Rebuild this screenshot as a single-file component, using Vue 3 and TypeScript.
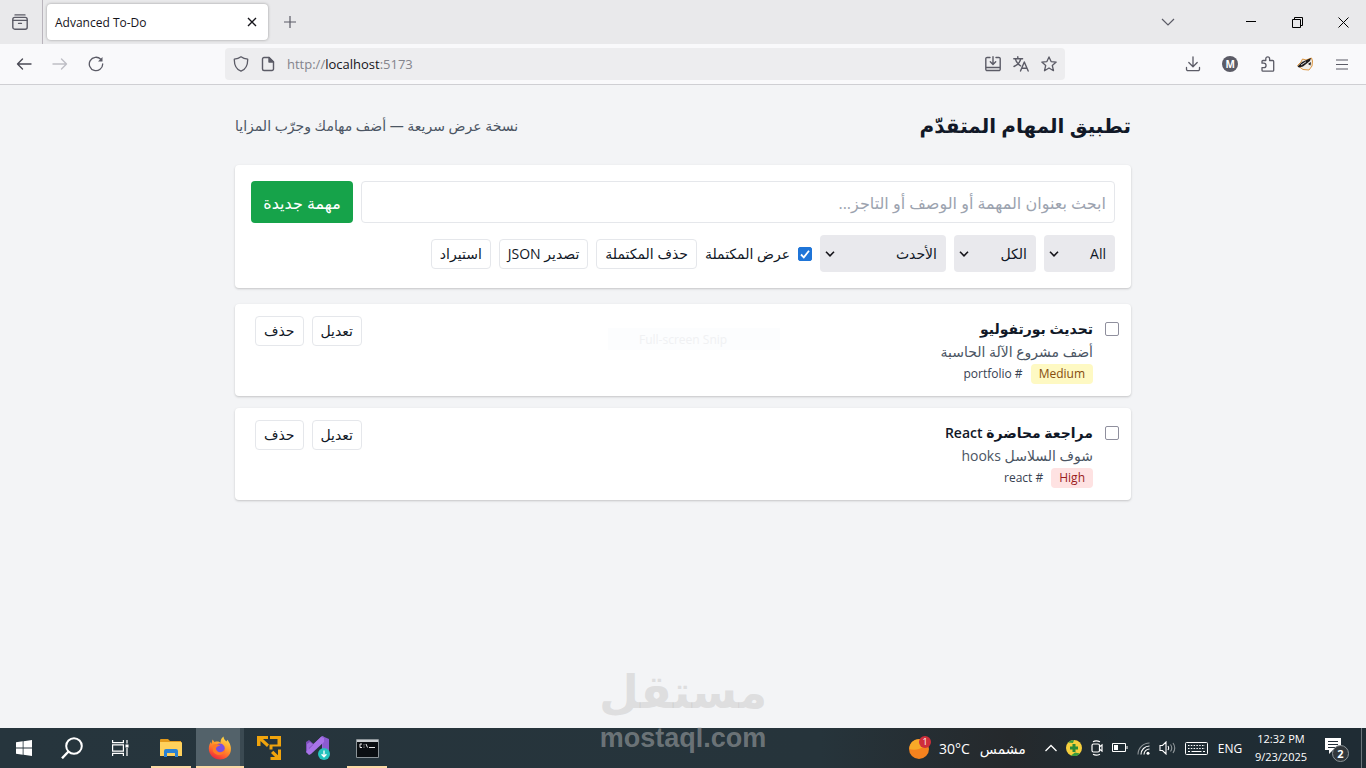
<script setup lang="ts">
import { computed, ref } from 'vue'

interface Task {
  id: number
  title: string
  description: string
  priority: 'High' | 'Medium' | 'Low'
  tag: string
  done: boolean
}

const tasks = ref<Task[]>([
  { id: 1, title: 'تحديث بورتفوليو', description: 'أضف مشروع الآلة الحاسبة', priority: 'Medium', tag: 'portfolio', done: false },
  { id: 2, title: 'مراجعة محاضرة React', description: 'شوف السلاسل hooks', priority: 'High', tag: 'react', done: false },
])
const query = ref('')
const showDone = ref(true)

const visible = computed(() =>
  tasks.value.filter(
    (t) => (showDone.value || !t.done) && (t.title + t.description + t.tag).includes(query.value),
  ),
)

function remove(id: number) {
  tasks.value = tasks.value.filter((t) => t.id !== id)
}
function clearDone() {
  tasks.value = tasks.value.filter((t) => !t.done)
}
</script>

<template>
  <div class="screen">
    <header class="tabs">
      <button class="ib view" aria-label="Firefox View">
        <svg width="16" height="16" viewBox="0 0 16 16" fill="none" stroke="#5b5b66" stroke-width="1.4" stroke-linecap="round"><path d="M3 .9h10" /><rect x=".8" y="3.4" width="14.4" height="11.8" rx="2" /><path d="M1 6.4h14M6.5 9.4h3" stroke-width="1.3" /></svg>
      </button>
      <div class="tab">
        <span>Advanced To-Do</span>
        <button class="ib x" aria-label="Close tab">
          <svg width="10" height="10" viewBox="0 0 10 10" stroke="#15141a" stroke-width="1.4"><path d="M1 1l8 8M9 1L1 9" /></svg>
        </button>
      </div>
      <button class="ib plus" aria-label="New tab">
        <svg width="12" height="12" viewBox="0 0 12 12" stroke="#5b5b66" stroke-width="1.2"><path d="M6 0v12M0 6h12" /></svg>
      </button>
      <div class="grow"></div>
      <button class="ib list" aria-label="List all tabs">
        <svg width="14" height="8" viewBox="0 0 14 8" fill="none" stroke="#5b5b66" stroke-width="1.2"><path d="M1 1l6 6 6-6" /></svg>
      </button>
      <div class="win">
        <button class="ib" aria-label="Minimize"><svg width="10" height="10" viewBox="0 0 10 10" stroke="#000"><path d="M0 4.5h10" /></svg></button>
        <button class="ib" aria-label="Restore"><svg width="11" height="11" viewBox="0 0 11 11" fill="none" stroke="#000"><path d="M.5 2.5h8v8h-8zM2.5 2.500v-2h8v8h-2" /></svg></button>
        <button class="ib" aria-label="Close"><svg width="11" height="11" viewBox="0 0 11 11" stroke="#000"><path d="M.5 .5l10 10M10.500 .5l-10 10" /></svg></button>
      </div>
    </header>

    <nav class="toolbar">
      <div class="navs">
        <button class="ib" aria-label="Back"><svg width="16" height="16" viewBox="0 0 16 16" fill="none" stroke="#4a4a55" stroke-width="1.4" stroke-linecap="round" stroke-linejoin="round"><path d="M15 8H1.500M6.500 3L1.500 8l5 5" /></svg></button>
        <button class="ib" aria-label="Forward"><svg width="16" height="16" viewBox="0 0 16 16" fill="none" stroke="#bebec5" stroke-width="1.4" stroke-linecap="round" stroke-linejoin="round"><path d="M1 8h13.500M9.500 3l5 5-5 5" /></svg></button>
        <button class="ib" aria-label="Reload"><svg width="16" height="16" viewBox="0 0 16 16" fill="none" stroke="#5b5b66" stroke-width="1.3" stroke-linecap="round"><path d="M12.800 3.300A6.700 6.700 0 1 0 14.700 8" /><path d="M14.500 1v4.500H10z" fill="#5b5b66" stroke="none" /></svg></button>
      </div>
      <div class="url">
        <svg width="16" height="16" viewBox="0 0 16 16" fill="none" stroke="#5b5b66" stroke-width="1.3" stroke-linejoin="round"><path d="M8 .8C6 2.300 3.500 3 1.300 3.200 1.200 8.500 2.700 13 8 15.200c5.300-2.200 6.800-6.700 6.700-12C12.500 3 10 2.300 8 .8z" /></svg>
        <svg width="14" height="16" viewBox="0 0 14 16" fill="none" stroke="#5b5b66" stroke-width="1.4" stroke-linejoin="round"><path d="M8 1.500H3A1.500 1.500 0 0 0 1.500 3v10A1.500 1.500 0 0 0 3 14.500h8a1.500 1.500 0 0 0 1.500-1.500V6z" /><path d="M8 1.500V6h4.500z" fill="#5b5b66" /></svg>
        <span class="addr">http://<b>localhost</b>:5173</span>
        <button class="ib" aria-label="Install"><svg width="16" height="16" viewBox="0 0 16 16" fill="none" stroke="#5b5b66" stroke-width="1.4" stroke-linecap="round" stroke-linejoin="round"><path d="M5 1.500H2.200A1.300 1.300 0 0 0 .8 2.800v10.400a1.300 1.300 0 0 0 1.400 1.300h11.600a1.300 1.300 0 0 0 1.400-1.300V2.800a1.300 1.300 0 0 0-1.400-1.300H11M1 11.500h14M8 .8v7.500M5.300 5.800L8 8.500l2.700-2.700" /></svg></button>
        <button class="ib" aria-label="Translate"><svg width="16" height="16" viewBox="0 0 16 16" fill="none" stroke="#5b5b66" stroke-width="1.4" stroke-linecap="round" stroke-linejoin="round"><path d="M.8 2.800h8.800M4.800 .8v2M2.300 2.800c.8 3 3 5.700 5.300 7M7.800 2.800C7 6 4 9.200 1 10.500M7.500 15l3.800-9 3.900 9M8.800 12.300h5" /></svg></button>
        <button class="ib" aria-label="Bookmark"><svg width="16" height="16" viewBox="0 0 16 16" fill="none" stroke="#5b5b66" stroke-width="1.3" stroke-linejoin="round"><path d="M8 .9l2.100 4.700 5.100.5-3.900 3.400 1.200 5.200L8 12l-4.500 2.700 1.200-5.200L.8 6.100l5.100-.5z" /></svg></button>
      </div>
      <div class="tools">
        <button class="ib" aria-label="Downloads"><svg width="16" height="16" viewBox="0 0 16 16" fill="none" stroke="#5b5b66" stroke-width="1.300" stroke-linecap="round" stroke-linejoin="round"><path d="M8 .8v9.700M3.800 6.500L8 10.700l4.200-4.200M1.500 11.500v1.800a1.400 1.400 0 0 0 1.400 1.400h10.200a1.400 1.400 0 0 0 1.400-1.400v-1.800" /></svg></button>
        <button class="ib" aria-label="Account"><span class="avatar">M</span></button>
        <button class="ib" aria-label="Extensions"><svg width="16" height="16" viewBox="0 0 16 16" fill="none" stroke="#5b5b66" stroke-width="1.300" stroke-linejoin="round"><path d="M2 7.200V5.500a1 1 0 0 1 1-1h2.800V2.700a1.900 1.900 0 0 1 3.800 0v1.800h3.100a1 1 0 0 1 1 1v8.700a1 1 0 0 1-1 1H3a1 1 0 0 1-1-1v-2.500h1.800a2.200 2.200 0 0 0 0-4.500z" /></svg></button>
        <button class="ib" aria-label="Privacy Badger"><svg width="16" height="14" viewBox="0 0 16 14"><path d="M.5 8.500L4 5l1.500-3L9 3l5.500-2 1 3-.5 5-3 4-6-.5z" fill="#efece6" stroke="#d98a2b" stroke-width=".9" /><path d="M.5 9.500L5 5l9-4-1 3-7 5.500-4 1zM11 7l3-2-.5 3.500z" fill="#1d1b1c" /><path d="M4 8l5-3.200" stroke="#fff" stroke-width=".8" /></svg></button>
        <button class="ib" aria-label="Menu"><svg width="12" height="11" viewBox="0 0 12 11" stroke="#5b5b66" stroke-width="1.200"><path d="M0 1h12M0 5.500h12M0 10h12" /></svg></button>
      </div>
    </nav>

    <main class="page" dir="rtl" lang="ar">
      <div class="wrap">
        <div class="head">
          <h1>تطبيق المهام المتقدّم</h1>
          <p>نسخة عرض سريعة — أضف مهامك وجرّب المزايا</p>
        </div>

        <section class="card panel">
          <div class="row">
            <input v-model="query" class="search" type="text" aria-label="بحث" placeholder="ابحث بعنوان المهمة أو الوصف أو التاجز..." />
            <button class="new">مهمة جديدة</button>
          </div>
          <div class="row filters">
            <div class="sel s1"><select aria-label="الأولوية"><option>All</option></select><svg width="10" height="6" viewBox="0 0 10 6" fill="none" stroke="#15141a" stroke-width="1.600"><path d="M1 .8l4 4 4-4" /></svg></div>
            <div class="sel s2"><select aria-label="الحالة"><option>الكل</option></select><svg width="10" height="6" viewBox="0 0 10 6" fill="none" stroke="#15141a" stroke-width="1.600"><path d="M1 .8l4 4 4-4" /></svg></div>
            <div class="sel s3"><select aria-label="الترتيب"><option>الأحدث</option></select><svg width="10" height="6" viewBox="0 0 10 6" fill="none" stroke="#15141a" stroke-width="1.600"><path d="M1 .8l4 4 4-4" /></svg></div>
            <label class="show"><input v-model="showDone" class="check" type="checkbox" /><span>عرض المكتملة</span></label>
            <button class="btn" @click="clearDone">حذف المكتملة</button>
            <button class="btn">تصدير JSON</button>
            <button class="btn">استيراد</button>
          </div>
        </section>

        <ul class="tasks">
          <li v-for="t in visible" :key="t.id" class="card task">
            <input :id="`task-${t.id}`" v-model="t.done" class="check" type="checkbox" />
            <div class="body">
              <label class="title" :for="`task-${t.id}`">{{ t.title }}</label>
              <p class="desc">{{ t.description }}</p>
              <div class="meta">
                <span class="badge" :class="t.priority.toLowerCase()">{{ t.priority }}</span>
                <span># {{ t.tag }}</span>
              </div>
            </div>
            <div class="actions">
              <button class="btn">تعديل</button>
              <button class="btn" @click="remove(t.id)">حذف</button>
            </div>
          </li>
        </ul>
      </div>
      <div class="snip" dir="ltr">Full-screen Snip</div>
    </main>

    <footer class="taskbar">
      <div class="pins">
        <button class="pin" aria-label="Start"><svg width="16" height="16" viewBox="0 0 16 16" fill="#fff"><path d="M0 2.300L6.700 1.300v6.300H0zM7.500 1.200L16 0v7.600H7.500zM0 8.400h6.700v6.300L0 13.700zM7.500 8.400H16V16l-8.500-1.200z" /></svg></button>
        <button class="pin" aria-label="Search"><svg width="22" height="22" viewBox="0 0 22 22" fill="none" stroke="#fff" stroke-width="2"><circle cx="13" cy="9" r="7.800" /><path d="M7.500 14.500L1 21.300" stroke-width="2.400" /></svg></button>
        <button class="pin" aria-label="Task View"><svg width="17" height="16" viewBox="0 0 17 16" fill="none" stroke="#fff" stroke-width="1.200"><path d="M.6 0v2.600h10.800V0M.6 16v-2.600h10.800V16M.6 4.800h10.800v6.400H.6zM15 0v3.500M15 8v8" /><path d="M13.500 4.500h3v3h-3z" fill="#fff" stroke="none" /></svg></button>
      </div>
      <div class="apps">
        <button class="pin open" aria-label="File Explorer"><svg width="22" height="20" viewBox="0 0 22 20"><path d="M0 2a1 1 0 0 1 1-1h7l2 2h11v3H0z" fill="#e39a1b" /><path d="M0 4h21a1 1 0 0 1 1 1v13H0z" fill="#ffd15c" /><path d="M4 18v-5a2 2 0 0 1 2-2h10a2 2 0 0 1 2 2v6h-3v-4H7v4H4z" fill="#2b82d4" /></svg></button>
        <button class="pin active" aria-label="Firefox"><svg width="24" height="24" viewBox="0 0 24 24"><defs><linearGradient id="fx" x1=".8" y1="0" x2=".3" y2="1"><stop offset="0" stop-color="#ffe14a" /><stop offset=".45" stop-color="#ff9a2a" /><stop offset=".75" stop-color="#ff5a2f" /><stop offset="1" stop-color="#e6253f" /></linearGradient></defs><path d="M15.500.5c.2 2.500 1.500 3.600 3 5.100l.8-1.800c2.800 3.300 4.500 7.700 3.300 12-1.300 4.800-5.600 7.700-10.500 7.700C6 23.500.8 18.800.8 12.700c0-3.200 1-5.200 2-6.700l.6 2L4.500 3.500 6.500 6c3-.8 4.500-.3 6 .8 0-2.800 1-5 3-6.300z" fill="url(#fx)" /><circle cx="11.800" cy="12.500" r="5" fill="#7a4fe0" /><path d="M4.500 9c3-2 5.500-1 8 .6-3 .4-3.600 1.200-4.600 2.600C8 16.500 14 18 17 13c1.500 6-8.500 8.500-12 2.500z" fill="#ff7a25" /></svg></button>
        <button class="pin" aria-label="Virtual machine"><svg width="24" height="24" viewBox="0 0 24 24" fill="#f0a40d"><path d="M0 0h11v3H6l6 5.500-2 2.500-6.500-6V10H0z" /><path d="M13 0h11v10.500h-8.500v3H12.500V8.500h8V3H13z" /><path d="M24 13.500V24H13.500v-3h4.500l-4-4 2.300-2.300 4.700 4.500v-5.700z" /></svg></button>
        <button class="pin" aria-label="Visual Studio"><svg width="26" height="24" viewBox="0 0 26 24"><path d="M1 6l3-2 7 6-3 4-4 4-3-2z" fill="#7b4db8" /><path d="M4 12L17 0l2 1v16L5 6 2 8v7l3 2z" fill="#a06ee0" /><path d="M17 0l7 3v17l-6 3z" fill="#8a5bd0" /><path d="M17 7l-6 5 6 5z" fill="#24343c" /><path d="M1 16L16 1l3 1v4L6 18l-2 1z" fill="#a873e8" /><circle cx="19" cy="18" r="6" fill="#25c3bd" /><path d="M19 14.500v6M16.600 18.300l2.400 2.500 2.400-2.500" fill="none" stroke="#fff" stroke-width="1.300" /></svg></button>
        <button class="pin open" aria-label="Command Prompt"><svg width="23" height="19" viewBox="0 0 23 19"><path d="M.5.5h22v18H.5z" fill="#0b0f12" stroke="#8c9498" /><path d="M1 1h21v2H1z" fill="#c9cdcf" /><path d="M6 5H4v3.500h2M8 5.500v.8M8 7.700v.8M10 5l1.500 3.500M13 8.500h6" fill="none" stroke="#e8e8e8" /></svg></button>
      </div>
      <div class="grow"></div>
      <button class="weather" aria-label="Weather">
        <svg width="24" height="24" viewBox="0 0 24 24"><circle cx="10" cy="13" r="10" fill="#f5821e" /><path d="M.4 11A10 10 0 0 1 18 7c-3 5-10 8-17.500 6z" fill="#f7a928" /><circle cx="16" cy="6" r="6" fill="#cf2f3a" /><text x="16" y="9" font-size="9" fill="#fff" text-anchor="middle">1</text></svg>
        <span>30°C</span><span dir="rtl" class="sunny">مشمس</span>
      </button>
      <div class="tray">
        <svg width="12" height="8" viewBox="0 0 12 8" fill="none" stroke="#fff" stroke-width="1.300"><path d="M.5 7L6 1.500 11.500 7" /></svg>
        <svg width="16" height="16" viewBox="0 0 16 16"><circle cx="8" cy="8" r="8" fill="#f6cf3d" /><path d="M2 2.500A8 8 0 0 1 8 0l-1 3zM14 13.500A8 8 0 0 1 5 15.500l4-3z" fill="#3a9b3f" /><path d="M8 4v8M4 8h8" stroke="#2c8a37" stroke-width="3" /></svg>
        <svg width="12" height="16" viewBox="0 0 12 16" fill="none" stroke="#fff" stroke-width="1.200"><path d="M2 1.800Q5 0 9 1.800M2 14.200q3 1.800 7 0M8.500 6.800L11 5v6L8.500 9.200" /><rect x="1" y="4" width="7.500" height="8" rx="1.500" /></svg>
        <svg width="16" height="10" viewBox="0 0 16 10" fill="none" stroke="#fff"><path d="M.5 .5h13v8H.5z" /><path d="M2 2h4v5H2z" fill="#fff" stroke="none" /><path d="M15 3v3" /></svg>
        <svg width="13" height="13" viewBox="0 0 13 13" fill="none" stroke="#fff" stroke-width="1.100"><path d="M1 12.500A11.500 11.500 0 0 1 12.500 1" opacity=".5" /><path d="M4 12.500A8.500 8.500 0 0 1 12.500 4M7 12.500A5.500 5.500 0 0 1 12.500 7" /><circle cx="11" cy="11.300" r="1.500" fill="#fff" stroke="none" /></svg>
        <svg width="17" height="14" viewBox="0 0 17 14" fill="none" stroke="#fff" stroke-width="1.100"><path d="M1 4.500h2.500L7 1v12L3.500 9.500H1zM9 5q1.300 2 0 4" /><path d="M11.500 3.500q2.500 3.500 0 7M14 2q3.500 5 0 10" opacity=".5" /></svg>
        <svg width="23" height="13" viewBox="0 0 23 13" fill="none" stroke="#fff"><rect x=".5" y=".5" width="22" height="12" rx="1" /><path d="M3 3.500h17M3 6.500h17" stroke-dasharray="1.500 1.300" /><path d="M3 9.500h2M6.500 9.500h10M18 9.500h2" /></svg>
      </div>
      <span class="lang">ENG</span>
      <div class="clock"><span>12:32 PM</span><span>9/23/2025</span></div>
      <button class="note" aria-label="Notifications">
        <svg width="26" height="26" viewBox="0 0 26 26"><path d="M1 1h16v12H9l-4 4v-4H1z" fill="#fff" /><path d="M4 4.500h10M4 7.500h10M4 10.500h8" stroke="#24303a" /><circle cx="16.500" cy="16.500" r="8" fill="#32383c" stroke="#8d9599" /><text x="16.500" y="20.500" font-size="11" font-weight="700" fill="#fff" text-anchor="middle">2</text></svg>
      </button>
      <div class="peek"></div>
    </footer>

    <div class="mark" aria-hidden="true">
      <span class="mark-ar" dir="rtl">مستقل</span>
      <span class="mark-en">mostaql.com</span>
    </div>
  </div>
</template>

<style>
body {
  margin: 0;
}
</style>

<style scoped>
* {
  box-sizing: border-box;
}
.screen {
  position: relative;
  display: flex;
  flex-direction: column;
  min-height: 100vh;
  background: #f3f4f6;
  color: #111827;
  font-family: 'Open Sans', 'Noto Sans', 'DejaVu Sans', sans-serif;
}
button {
  font: inherit;
  color: inherit;
  padding: 0;
  border: 0;
  background: none;
}
svg {
  display: block;
  flex: none;
}
p,
h1,
ul {
  margin: 0;
  padding: 0;
}
.grow {
  flex: 1;
}
.ib {
  display: flex;
  align-items: center;
  justify-content: center;
}
.tabs {
  display: flex;
  align-items: center;
  height: 44px;
  background: #e9e9eb;
}
.view {
  width: 43px;
  height: 44px;
  padding-right: 3px;
  border-right: 1px solid #b9b4bc;
}
.tab {
  display: flex;
  align-items: center;
  justify-content: space-between;
  width: 221px;
  height: 36px;
  margin-left: 4px;
  padding: 0 11px 0 8px;
  border-radius: 4px;
  background: #fff;
  box-shadow: 0 0 3px rgba(0, 0, 0, 0.35);
  font-size: 12px;
  color: #15141a;
}
.plus {
  width: 44px;
}
.list {
  width: 36px;
  margin-right: 42px;
}
.win {
  display: flex;
}
.win .ib {
  width: 46px;
  height: 44px;
}
.toolbar {
  display: flex;
  align-items: center;
  height: 41px;
  border-bottom: 1px solid #cfcfd3;
  background: #f9f9fb;
}
.navs {
  display: flex;
  flex: 0 0 225px;
  gap: 20px;
  padding-left: 16px;
}
.url {
  display: flex;
  align-items: center;
  flex: 1;
  gap: 12px;
  height: 32px;
  padding: 0 8px;
  border-radius: 4px;
  background: #ededef;
}
.addr {
  flex: 1;
  font-size: 13px;
  color: #84848c;
}
.addr b {
  font-weight: 400;
  color: #15141a;
}
.tools {
  display: flex;
  justify-content: space-between;
  flex: 0 0 301px;
  padding: 0 16px 0 120px;
}
.tools .ib {
  width: 16px;
}
.avatar {
  width: 16px;
  height: 16px;
  border-radius: 50%;
  background: #5b5b66;
  color: #fff;
  font-size: 10px;
  font-weight: 700;
  line-height: 16px;
}
.page {
  position: relative;
  flex: 1;
  padding: 24px;
}
.wrap {
  max-width: 896px;
  margin: 0 auto;
}
.head {
  display: flex;
  align-items: center;
  justify-content: space-between;
  height: 34px;
  margin-bottom: 22px;
}
h1 {
  font-size: 20px;
  font-weight: 600;
  line-height: 34px;
}
.head p {
  font-size: 14px;
  line-height: 20px;
  color: #4b5563;
}
.card {
  border-radius: 4px;
  background: #fff;
  box-shadow: 0 1px 3px rgba(0, 0, 0, 0.1), 0 1px 2px rgba(0, 0, 0, 0.1);
}
.panel {
  padding: 16px;
}
.row {
  display: flex;
  align-items: center;
  gap: 8px;
}
.filters {
  margin-top: 12px;
  font-size: 14px;
}
.search {
  flex: 1;
  min-width: 0;
  height: 42px;
  padding: 2px 8px 0;
  border: 1px solid #e5e7eb;
  border-radius: 4px;
  background: #fff;
  font: inherit;
  font-size: 16px;
}
.search::placeholder {
  color: #9ca3af;
  opacity: 1;
}
.new {
  width: 102px;
  height: 42px;
  padding-top: 2px;
  border-radius: 4px;
  background: #16a34a;
  color: #fff;
  font-size: 16px;
}
.sel {
  position: relative;
}
.sel select {
  appearance: none;
  width: 100%;
  height: 37px;
  padding: 0 9px;
  border: 0;
  border-radius: 4px;
  background: #e9e9ed;
  color: inherit;
  font: inherit;
}
.sel svg {
  position: absolute;
  left: 5px;
  top: 16px;
  pointer-events: none;
}
.s1 {
  width: 71px;
}
.s2 {
  width: 82px;
}
.s3 {
  width: 126px;
}
.show {
  display: flex;
  align-items: center;
  gap: 8px;
}
.check {
  appearance: none;
  flex: none;
  width: 14px;
  height: 14px;
  margin: 0;
  border: 1px solid #8f8f9d;
  border-radius: 2px;
  background: #fff;
}
.check:checked {
  border-color: #1f75d8;
  background: #1f75d8 url("data:image/svg+xml,%3Csvg xmlns='http://www.w3.org/2000/svg' viewBox='0 0 12 12'%3E%3Cpath d='M2 6.500l2.800 2.800L10 2.800' fill='none' stroke='white' stroke-width='1.800'/%3E%3C/svg%3E");
}
.btn {
  height: 30px;
  padding: 0 8px;
  border: 1px solid #e5e7eb;
  border-radius: 4px;
  font-size: 14px;
  line-height: 20px;
  white-space: nowrap;
}
.tasks {
  display: grid;
  gap: 12px;
  margin-top: 16px;
  list-style: none;
}
.task {
  display: flex;
  align-items: flex-start;
  gap: 12px;
  padding: 12px;
}
.task .check {
  margin-top: 6px;
}
.body {
  flex: 1;
}
.title {
  display: block;
  font-size: 14px;
  font-weight: 600;
  line-height: 26px;
}
.desc {
  font-size: 14px;
  line-height: 20px;
  color: #4b5563;
}
.meta {
  display: flex;
  align-items: center;
  gap: 8px;
  margin-top: 2px;
  font-size: 12px;
  line-height: 20px;
  color: #374151;
}
.badge {
  padding: 0 8px;
  border-radius: 4px;
}
.medium {
  background: #fef9c3;
  color: #854d0e;
}
.high {
  background: #fee2e2;
  color: #991b1b;
}
.actions {
  display: flex;
  gap: 8px;
  padding-left: 8px;
}
.snip {
  position: absolute;
  left: 608px;
  top: 243px;
  width: 172px;
  height: 22px;
  padding-left: 31px;
  background: #fcfdfe;
  color: #f0f1f3;
  font-size: 12px;
  line-height: 24px;
}
.taskbar {
  display: flex;
  align-items: center;
  height: 40px;
  background: linear-gradient(90deg, #26353d 0, #26343b 60%, #25292c 74%, #1f2c33 82%, #1f2c34 100%);
  color: #fff;
}
.pins,
.apps {
  display: flex;
}
.apps {
  gap: 1px;
  margin-left: 3px;
}
.pin {
  position: relative;
  display: flex;
  align-items: center;
  justify-content: center;
  width: 48px;
  height: 40px;
}
.active {
  background: linear-gradient(90deg, #53626a 44px, #3b4a52 44px);
  box-shadow: inset 0 -2px #fbd9a5;
}
.open::after {
  content: '';
  position: absolute;
  left: 4px;
  right: 4px;
  bottom: 0;
  height: 2px;
  background: #fbd9a5;
}
.weather {
  display: flex;
  align-items: center;
  gap: 6px;
  width: 114px;
  margin-right: 22px;
  font-size: 14px;
}
.sunny {
  margin-left: 4px;
}
.tray {
  display: flex;
  align-items: center;
  gap: 9px;
}
.lang {
  width: 44px;
  text-align: center;
  font-size: 12px;
}
.clock {
  display: flex;
  flex-direction: column;
  align-items: center;
  width: 58px;
  font-size: 11px;
  line-height: 18px;
}
.note {
  margin: 4px 11px 0 14px;
}
.peek {
  width: 5px;
  height: 40px;
  border-left: 1px solid #6b757b;
}
.mark {
  position: absolute;
  left: 50%;
  bottom: 12px;
  display: flex;
  flex-direction: column;
  align-items: center;
  transform: translateX(-50%);
  color: rgba(195, 195, 195, 0.45);
  font-weight: 700;
  pointer-events: none;
}
.mark-ar {
  font-family: 'DejaVu Sans', sans-serif;
  font-size: 46px;
  line-height: 56px;
}
.mark-en {
  font-family: 'Liberation Sans', Arial, sans-serif;
  font-size: 27px;
  line-height: 36px;
}
</style>
